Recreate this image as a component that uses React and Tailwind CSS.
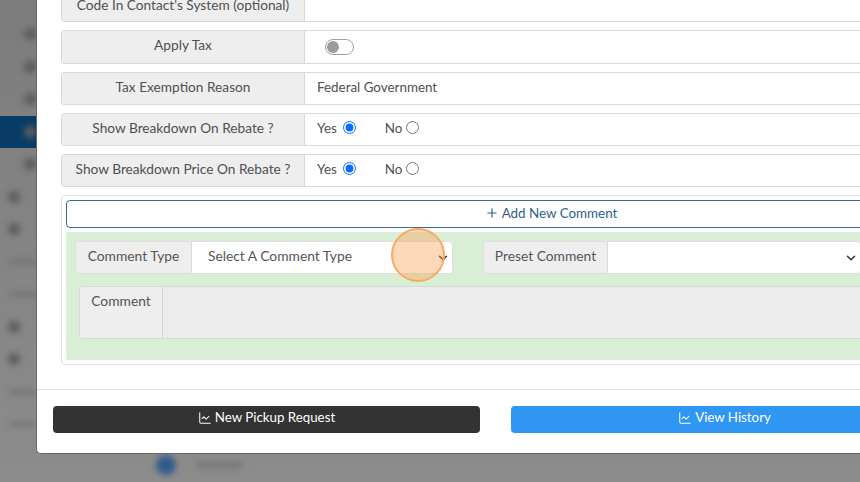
import { ChartLine, ChevronDown, Plus } from 'lucide-react';

const font = "font-['Lato','Noto_Sans',sans-serif]";

const marks = [
  { w: 'w-4 ml-[24px]' },
  { w: 'w-4 ml-[24px]' },
  { w: 'w-4 ml-[24px]' },
  { w: 'w-4 ml-[24px]', active: true },
  { w: 'w-4 ml-[24px]' },
  { w: 'w-3 ml-[8px]' },
  { w: 'w-3 ml-[8px]' },
  { w: 'w-7 ml-[9px]', thin: true },
  { w: 'w-7 ml-[9px]', thin: true },
  { w: 'w-3 ml-[8px]' },
  { w: 'w-3 ml-[8px]' },
  { w: 'w-7 ml-[9px]', thin: true },
  { w: 'w-7 ml-[9px]', thin: true },
];

const Backdrop = () => (
  <div className="absolute inset-0 bg-gradient-to-b from-[#7c7c7c] to-[#8c8c8c]">
    <div className="flex flex-col pt-[18px] w-[37px]">
      {marks.map((m, i) => (
        <div key={i} className={`h-[32.5px] flex items-center ${m.active ? 'bg-[#0a3c68]' : ''}`}>
          <div className={`${m.w} ${m.thin ? 'h-1 bg-[#707070]' : 'h-3 bg-[#5c5c5c]'} ${m.active ? 'bg-[#4a6a88]' : ''} rounded-full blur-[3px]`} />
        </div>
      ))}
    </div>
    <div className="absolute left-[156px] top-[455px] flex items-center gap-[20px] blur-[3px]">
      <div className="size-5 rounded-full bg-[#2f5a8c]" />
      <div className="w-[46px] h-1.5 bg-[#757575]" />
    </div>
  </div>
);

const Row = ({ label, h = 'h-[33px]', labelClass = 'pb-[2px]', children }) => (
  <div className={`flex ${h} mb-2 border border-[#d8d8d8] rounded-[3px] overflow-hidden bg-white`}>
    <div className={`w-[243px] shrink-0 bg-[#eeeeee] border-r border-[#d8d8d8] flex items-center justify-center text-[#505050] text-[13.7px] ${labelClass}`}>
      {label}
    </div>
    <div className="flex-1 flex items-center pl-3 text-[#505050] text-[13.4px]">{children}</div>
  </div>
);

const Radios = () => (
  <div className="flex items-center">
    <span className="pb-[2px]">Yes</span>
    <input type="radio" readOnly checked className="ml-[6px] size-[13px] mb-1 accent-[#0d6efd]" />
    <span className="ml-[29px] pb-[2px]">No</span>
    <input type="radio" readOnly checked={false} className="ml-[4px] size-[13px] mb-1 accent-[#0d6efd]" />
  </div>
);

const SelectGroup = ({ label, labelWidth, value }) => (
  <div className="flex w-[378px] h-[33px] rounded-[4px] border border-[#dedede] overflow-hidden bg-white text-[13.8px]">
    <div className={`${labelWidth} shrink-0 bg-[#eeeeee] border-r border-[#dcdcdc] flex items-center justify-center text-[#555] pb-[3px]`}>
      {label}
    </div>
    <div className="flex-1 flex items-center justify-between pl-4 pr-[2px] text-[#555] pb-[3px]">
      <span>{value}</span>
      <ChevronDown size={14} strokeWidth={2.5} className="text-[#333] mt-[3px]" />
    </div>
  </div>
);

export default function App() {
  return (
    <div className={`relative w-[860px] h-[482px] overflow-hidden flex flex-col justify-end pl-[36px] pb-[28px] text-[14px] ${font}`}>
      <Backdrop />

      {/* modal */}
      <div className="relative w-[1005px] shrink-0 bg-white rounded-bl-[5px] border-l border-b border-[#666]">
        <div className="pl-6 pb-6">
          <Row label="Code In Contact's System (optional)" h="h-[36px]" labelClass="pt-[3px]">
            <span />
          </Row>
          <Row label="Apply Tax" h="h-[34px]" labelClass="pb-[3px]">
            <div className="ml-2 w-[29px] h-[16px] rounded-full border border-[#a0a0a0] bg-white flex items-center pl-[1px]">
              <div className="size-[12px] rounded-full bg-[#9b9b9b]" />
            </div>
          </Row>
          <Row label="Tax Exemption Reason">
            <span className="pb-[2px]">Federal Government</span>
          </Row>
          <Row label="Show Breakdown On Rebate ?"><Radios /></Row>
          <Row label="Show Breakdown Price On Rebate ?"><Radios /></Row>

          <div className="h-[170px] border border-[#e3e3e3] rounded-[4px] p-1">
            <button className="w-full h-[28px] border border-[#3d6a92] rounded-[4px] bg-white text-[#2f5f8a] text-[13.4px] flex items-center justify-center gap-[3px] pb-[2px]">
              <Plus size={14} strokeWidth={2} />
              Add New Comment
            </button>
            <div className="mt-1 h-[128px] bg-[#d9efd5] rounded-[2px] pt-[9px] pl-[9px]">
              <div className="flex gap-[30px]">
                <SelectGroup label="Comment Type" labelWidth="w-[116px]" value="Select A Comment Type" />
                <SelectGroup label="Preset Comment" labelWidth="w-[124px]" value="" />
              </div>
              <div className="mt-[12px] ml-1 flex h-[53px] rounded-[4px] border border-[#d8d8d8] overflow-hidden text-[13.8px]">
                <div className="w-[83px] shrink-0 bg-[#eeeeee] border-r border-[#d4d4d4] text-center pt-[4px] text-[#555]">
                  Comment
                </div>
                <div className="flex-1 bg-[#ececec]" />
              </div>
            </div>
          </div>
        </div>

        <div className="border-t border-[#e3e3e3] pt-4 pb-5 pl-4 flex gap-[31px] text-[13.3px]">
          <button className="w-[427px] h-[27px] rounded-[4px] bg-[#333333] text-white flex items-center justify-center gap-[3px] pb-[3px]">
            <ChartLine size={14} strokeWidth={1.75} />
            New Pickup Request
          </button>
          <button className="w-[427px] h-[27px] rounded-[4px] bg-[#2f96f3] text-white flex items-center justify-center gap-[3px] pb-[3px]">
            <ChartLine size={14} strokeWidth={1.75} />
            View History
          </button>
        </div>
      </div>

      {/* click marker */}
      <div className="absolute left-[391px] top-[228px] size-[54px] rounded-full border-2 border-[#fba862] bg-[#fb9f52]/40" />
    </div>
  );
}
